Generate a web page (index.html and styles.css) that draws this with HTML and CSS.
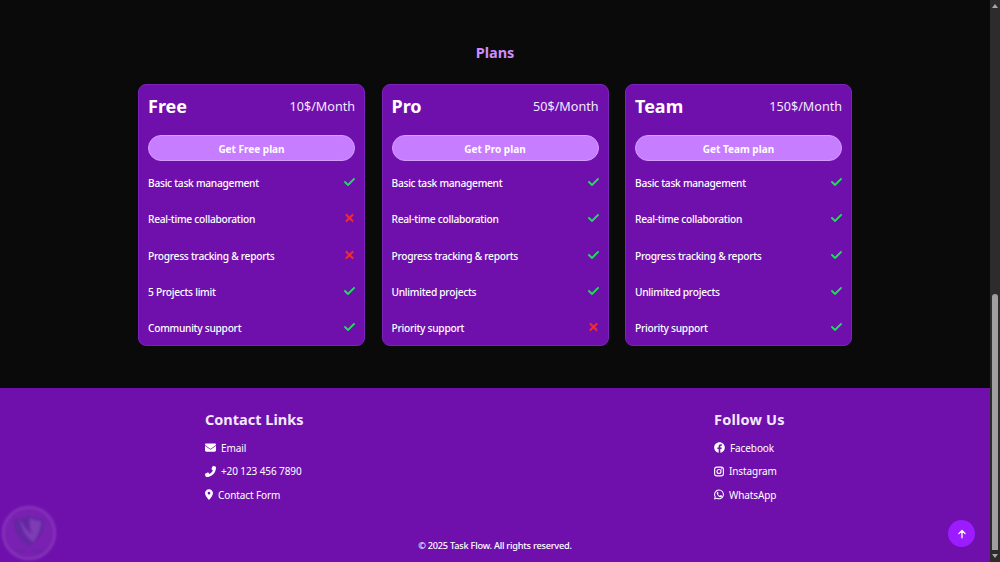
FILE: index.html
```html
<!DOCTYPE html>
<html lang="en">
<head>
    <meta charset="UTF-8">
    <meta name="viewport" content="width=device-width, initial-scale=1.0">
    <title>Task Flow</title>
    <link rel="stylesheet" href="styles.css">
</head>
<body>
    <svg class="sprite" xmlns="http://www.w3.org/2000/svg">
        <symbol id="i-check" viewBox="0 0 448 512"><path d="M438.6 105.4c12.5 12.5 12.5 32.8 0 45.3l-256 256c-12.5 12.5-32.8 12.5-45.3 0l-128-128c-12.5-12.5-12.5-32.8 0-45.3s32.8-12.5 45.3 0L160 338.7 393.4 105.4c12.5-12.5 32.8-12.5 45.3 0z"/></symbol>
        <symbol id="i-x" viewBox="0 0 384 512"><path d="M342.6 150.6c12.5-12.5 12.5-32.8 0-45.3s-32.8-12.5-45.3 0L192 210.7 86.6 105.4c-12.5-12.5-32.8-12.5-45.3 0s-12.5 32.8 0 45.3L146.7 256 41.4 361.4c-12.5 12.5-12.5 32.8 0 45.3s32.8 12.5 45.3 0L192 301.3 297.4 406.6c12.5 12.5 32.8 12.5 45.3 0s12.5-32.8 0-45.3L237.3 256 342.6 150.6z"/></symbol>
        <symbol id="i-mail" viewBox="0 0 512 512"><path d="M48 64C21.5 64 0 85.5 0 112c0 15.1 7.1 29.3 19.2 38.4L236.8 313.6c11.4 8.5 27 8.5 38.4 0L492.8 150.4c12.1-9.1 19.2-23.3 19.2-38.4c0-26.5-21.5-48-48-48H48zM0 176V384c0 35.3 28.7 64 64 64H448c35.3 0 64-28.7 64-64V176L294.4 339.2c-22.8 17.1-54 17.1-76.8 0L0 176z"/></symbol>
        <symbol id="i-phone" viewBox="0 0 512 512"><path transform="matrix(-1 0 0 1 512 0)" d="M164.9 24.6c-7.7-18.6-28-28.5-47.4-23.2l-88 24C12.1 30.2 0 46 0 64C0 311.4 200.6 512 448 512c18 0 33.8-12.1 38.6-29.5l24-88c5.3-19.4-4.6-39.7-23.2-47.4l-96-40c-16.3-6.8-35.2-2.1-46.3 11.6L304.7 368C234.3 334.7 177.3 277.7 144 207.3L193.3 167c13.7-11.2 18.4-30 11.6-46.3l-40-96z"/></symbol>
        <symbol id="i-pin" viewBox="0 0 384 512"><path d="M215.7 499.2C267 435 384 279.4 384 192C384 86 298 0 192 0S0 86 0 192c0 87.4 117 243 168.3 307.2c12.3 15.3 35.1 15.3 47.4 0zM192 128a64 64 0 1 1 0 128 64 64 0 1 1 0-128z"/></symbol>
        <symbol id="i-fb" viewBox="0 0 512 512"><path d="M504 256C504 119 393 8 256 8S8 119 8 256c0 123.78 90.69 226.38 209.25 245V327.69h-63V256h63v-54.64c0-62.15 37-96.48 93.67-96.48 27.14 0 55.52 4.84 55.52 4.84v61h-31.28c-30.8 0-40.41 19.12-40.41 38.73V256h68.78l-11 71.69h-57.78V501C413.31 482.38 504 379.78 504 256z"/></symbol>
        <symbol id="i-ig" viewBox="0 0 448 448"><rect x="28" y="28" width="392" height="392" rx="100" fill="none" stroke="currentColor" stroke-width="50"/><circle cx="224" cy="224" r="90" fill="none" stroke="currentColor" stroke-width="50"/><circle cx="340" cy="108" r="30"/></symbol>
        <symbol id="i-wa" viewBox="0 0 448 448"><path d="M224 26a196 196 0 0 0-168 297L30 420l100-26A196 196 0 1 0 224 26z" fill="none" stroke="currentColor" stroke-width="46"/><path d="M158 116c-12 0-34 18-34 52 0 34 25 68 29 73 4 5 49 78 121 101 46 15 74-7 80-30 4-15 4-28 3-31-1-3-5-5-11-8l-42-20c-6-2-10-3-14 3l-20 25c-4 4-7 5-13 2-34-16-57-32-80-72-3-6 0-9 3-12l14-17c3-4 4-7 6-12 2-4 1-8 0-11l-19-46c-5-12-10-4-23-4z"/></symbol>
    </svg>

    <div class="page">
        <section class="plans">
            <h2 class="plans-title">Plans</h2>
            <div class="plan-grid">
                <article class="plan">
                    <div class="plan-head"><h3>Free</h3><span class="price">10$/Month</span></div>
                    <a class="plan-btn">Get Free plan</a>
                    <ul class="features">
                        <li>Basic task management<svg class="yes"><use href="#i-check"/></svg></li>
                        <li>Real-time collaboration<svg class="no"><use href="#i-x"/></svg></li>
                        <li>Progress tracking &amp; reports<svg class="no"><use href="#i-x"/></svg></li>
                        <li>5 Projects limit<svg class="yes"><use href="#i-check"/></svg></li>
                        <li>Community support<svg class="yes"><use href="#i-check"/></svg></li>
                    </ul>
                </article>
                <article class="plan">
                    <div class="plan-head"><h3>Pro</h3><span class="price">50$/Month</span></div>
                    <a class="plan-btn">Get Pro plan</a>
                    <ul class="features">
                        <li>Basic task management<svg class="yes"><use href="#i-check"/></svg></li>
                        <li>Real-time collaboration<svg class="yes"><use href="#i-check"/></svg></li>
                        <li>Progress tracking &amp; reports<svg class="yes"><use href="#i-check"/></svg></li>
                        <li>Unlimited projects<svg class="yes"><use href="#i-check"/></svg></li>
                        <li>Priority support<svg class="no"><use href="#i-x"/></svg></li>
                    </ul>
                </article>
                <article class="plan">
                    <div class="plan-head"><h3>Team</h3><span class="price">150$/Month</span></div>
                    <a class="plan-btn">Get Team plan</a>
                    <ul class="features">
                        <li>Basic task management<svg class="yes"><use href="#i-check"/></svg></li>
                        <li>Real-time collaboration<svg class="yes"><use href="#i-check"/></svg></li>
                        <li>Progress tracking &amp; reports<svg class="yes"><use href="#i-check"/></svg></li>
                        <li>Unlimited projects<svg class="yes"><use href="#i-check"/></svg></li>
                        <li>Priority support<svg class="yes"><use href="#i-check"/></svg></li>
                    </ul>
                </article>
            </div>
        </section>

        <footer class="footer">
            <div class="footer-cols">
                <div class="footer-col">
                    <h4>Contact Links</h4>
                    <a><svg class="fi-mail"><use href="#i-mail"/></svg>Email</a>
                    <a><svg class="fi-phone"><use href="#i-phone"/></svg>+20 123 456 7890</a>
                    <a><svg class="fi-pin"><use href="#i-pin"/></svg>Contact Form</a>
                </div>
                <div class="footer-col follow">
                    <h4>Follow Us</h4>
                    <a><svg class="fi-fb"><use href="#i-fb"/></svg>Facebook</a>
                    <a><svg class="fi-ig"><use href="#i-ig"/></svg>Instagram</a>
                    <a><svg class="fi-wa"><use href="#i-wa"/></svg>WhatsApp</a>
                </div>
            </div>
            <p class="copyright">© 2025 Task Flow. All rights reserved.</p>
        </footer>
    </div>

    <!-- fake scrollbar, the shot is scrolled to the bottom -->
    <div class="scrollbar">
        <span class="arrow-up"></span>
        <div class="track"><div class="thumb"></div></div>
        <span class="arrow-down"></span>
    </div>

    <!-- watermark -->
    <svg class="watermark" viewBox="0 0 56 56">
        <circle cx="28" cy="28" r="26" fill="#9a52c4" fill-opacity=".25" stroke="#a868cc" stroke-opacity=".3" stroke-width="3"/>
        <path d="M13 14c6 0 11-1 15-4 4 3 9 4 15 4 1 12-4 21-15 27-11-6-16-15-15-27z" fill="#5c2a9c" fill-opacity=".7"/>
        <path d="M19 14c1 10 6 18 13 23 5-5 8-13 8-21-4 0-8-1-11-3-1 6 0 11 2 16-5-3-9-9-12-15z" fill="#8f4dc0" fill-opacity=".6"/>
        <path d="M15 46h11M30 46h13" stroke="#5c2a9c" stroke-opacity=".6" stroke-width="2"/>
    </svg>

    <a class="to-top">
        <svg viewBox="0 0 16 16"><path d="M8 13V3.5M3.8 7.5 8 3.3l4.2 4.2" fill="none" stroke="currentColor" stroke-width="1.7" stroke-linecap="round" stroke-linejoin="round"/></svg>
    </a>
</body>
</html>
```

FILE: styles.css
```css
/* Reset default styles */
* {
    margin: 0;
    padding: 0;
    box-sizing: border-box;
}

body {
    font-family: "Noto Sans", "Open Sans", sans-serif;
    background-color: #0a0a0a;
    color: white;
    display: flex;
    height: 562px;
    overflow: hidden;
    position: relative;
}

svg {
    fill: currentColor;
}

.sprite {
    display: none;
}

.page {
    flex: 1;
    min-width: 0;
}

/* Plans section */
.plans {
    height: 388px;
    padding-top: 42px;
}

.plans-title {
    font-size: 14.5px;
    line-height: 20px;
    font-weight: 700;
    color: #d08cff;
    text-align: center;
    margin-bottom: 22px;
}

.plan-grid {
    display: grid;
    grid-template-columns: repeat(3, 227px);
    justify-content: center;
    gap: 16.5px;
}

.plan {
    height: 262px;
    background-color: #6f10ad;
    border: 1px solid #7a22bb;
    border-radius: 8px;
    padding: 10px 9px;
}

.plan-head {
    display: flex;
    justify-content: space-between;
    align-items: center;
    height: 23px;
    margin-bottom: 17px;
}

.plan-head h3 {
    font-size: 18px;
    font-weight: 700;
    margin-top: -2px;
}

.price {
    font-size: 12.6px;
    color: #f3e8ff;
}

.plan-btn {
    display: block;
    height: 26px;
    line-height: 26px;
    background-color: #c77dff;
    border: 1px solid #d59dff;
    border-radius: 13px;
    font-size: 10px;
    font-weight: 700;
    text-align: center;
}

.features {
    list-style: none;
    margin-top: 3.6px;
}

.features li {
    display: flex;
    justify-content: space-between;
    align-items: center;
    height: 36.4px;
    font-size: 10.2px;
    letter-spacing: -0.27px;
    font-weight: 500;
}

.features svg {
    width: 11px;
    height: 12px;
    margin-top: -2px;
    stroke: currentColor;
    stroke-width: 30px;
}

.yes {
    color: #1fdc5a;
}

.no {
    color: #f5312c;
}

/* Footer */
.footer {
    height: 174px;
    background-color: #6f10ad;
    padding-top: 21px;
}

.footer-cols {
    display: flex;
    justify-content: space-between;
    width: 580px;
    margin: 0 auto;
}

.footer-col {
    display: flex;
    flex-direction: column;
    align-items: flex-start;
}

.follow {
    width: 71px;
}

.footer-col h4 {
    font-size: 14.5px;
    line-height: 20px;
    font-weight: 700;
    color: #f3e8ff;
    margin-bottom: 7px;
    white-space: nowrap;
}

.follow h4 {
    letter-spacing: 0.2px;
}

.footer-col a {
    display: flex;
    align-items: center;
    height: 23.5px;
    font-size: 10px;
    letter-spacing: -0.1px;
    white-space: nowrap;
}

.footer-col svg {
    height: 11px;
    margin-right: 5px;
}

.fi-mail { width: 11px; }
.fi-phone { width: 11px; }
.fi-pin { width: 8px; }
.fi-fb { width: 11px; }
.fi-ig { width: 10px; }
.fi-wa { width: 10px; }

.copyright {
    font-size: 9.2px;
    letter-spacing: -0.23px;
    font-weight: 500;
    line-height: 14px;
    text-align: center;
    margin-top: 32px;
}

/* Scrollbar */
.scrollbar {
    width: 10px;
    background-color: #2c2c2c;
    display: flex;
    flex-direction: column;
    align-items: center;
}

.arrow-up,
.arrow-down {
    width: 0;
    height: 0;
    margin: 4px 0;
    border-left: 3px solid transparent;
    border-right: 3px solid transparent;
}

.arrow-up {
    border-bottom: 4px solid #a8a8a8;
}

.arrow-down {
    border-top: 4px solid #a8a8a8;
}

.track {
    flex: 1;
    width: 100%;
    display: flex;
    flex-direction: column;
    justify-content: flex-end;
    align-items: center;
}

.thumb {
    width: 6px;
    height: 256px;
    background-color: #9f9f9f;
    border-radius: 3px 3px 0 0;
}

/* Things floating over the page */
.watermark {
    position: absolute;
    left: 1px;
    top: 505px;
    width: 56px;
    height: 56px;
    filter: blur(0.8px);
}

.to-top {
    position: absolute;
    left: 948px;
    top: 520px;
    width: 27px;
    height: 27px;
    border-radius: 50%;
    background-color: #9d1bff;
    display: flex;
    align-items: center;
    justify-content: center;
}

.to-top svg {
    width: 12px;
    height: 12px;
}
```
